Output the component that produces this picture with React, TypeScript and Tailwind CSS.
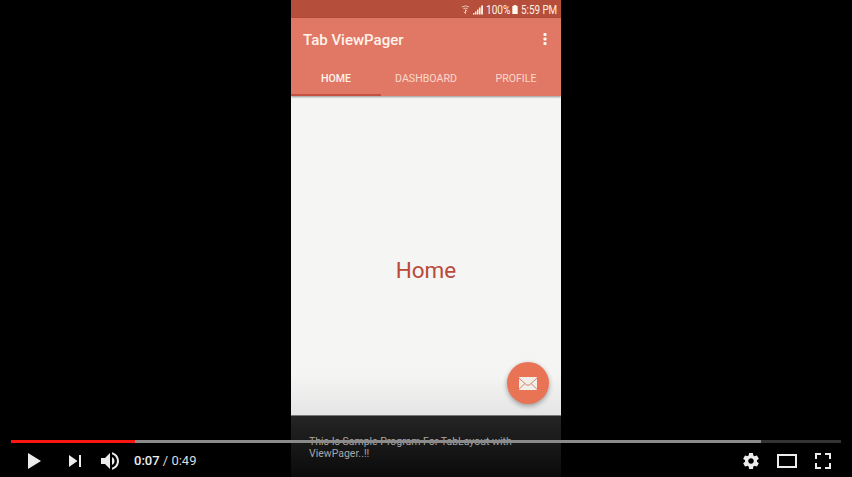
import type { ReactNode } from 'react';

const GEAR =
  'm 23.94,18.78 c .03,-0.25 .05,-0.51 .05,-0.78 0,-0.27 -0.02,-0.52 -0.05,-0.78 l 1.68,-1.32 c .15,-0.12 .19,-0.33 .09,-0.51 l -1.6,-2.76 c -0.09,-0.17 -0.31,-0.24 -0.48,-0.17 l -1.99,.8 c -0.41,-0.32 -0.86,-0.58 -1.35,-0.78 l -0.30,-2.12 c -0.02,-0.19 -0.19,-0.33 -0.39,-0.33 l -3.2,0 c -0.2,0 -0.36,.14 -0.39,.33 l -0.30,2.12 c -0.48,.2 -0.93,.47 -1.35,.78 l -1.99,-0.8 c -0.18,-0.07 -0.39,0 -0.48,.17 l -1.6,2.76 c -0.10,.17 -0.05,.39 .09,.51 l 1.68,1.32 c -0.03,.25 -0.05,.52 -0.05,.78 0,.26 .02,.52 .05,.78 l -1.68,1.32 c -0.15,.12 -0.19,.33 -0.09,.51 l 1.6,2.76 c .09,.17 .31,.24 .48,.17 l 1.99,-0.8 c .41,.32 .86,.58 1.35,.78 l .30,2.12 c .02,.19 .19,.33 .39,.33 l 3.2,0 c .2,0 .36,-0.14 .39,-0.33 l .30,-2.12 c .48,-0.2 .93,-0.47 1.35,-0.78 l 1.99,.8 c .18,.07 .39,0 .48,-0.17 l 1.6,-2.76 c .09,-0.17 .05,-0.39 -0.09,-0.51 l -1.68,-1.32 0,0 z m -5.94,2.01 c -1.54,0 -2.8,-1.25 -2.8,-2.8 0,-1.54 1.25,-2.8 2.8,-2.8 1.54,0 2.8,1.25 2.8,2.8 0,1.54 -1.25,2.8 -2.8,2.8 l 0,0 z';

function ControlButton({ label, wide, children }: { label: string; wide?: boolean; children: ReactNode }) {
  return (
    <button aria-label={label} className={wide ? 'flex w-[46px] justify-center' : 'flex w-9 justify-center'}>
      <svg viewBox="0 0 36 36" className="block size-9 shrink-0 fill-[#ececec]">
        {children}
      </svg>
    </button>
  );
}

function StatusBar() {
  return (
    <div className="flex h-[18px] items-center justify-end bg-[#b54e3b] pt-px pr-1 text-[12px] text-[#fff3e8]">
      <svg viewBox="0 0 10 10" className="mr-[3px] size-[9px]" fill="none" stroke="#ecc6b1" strokeWidth="1.1">
        <path d="M1 2.2Q5 -.3 9 2.2M2.6 4.2Q5 2.6 7.4 4.2" />
        <path d="M5 5v4.5M3.2 7.5 5 9.5M5 5.2 6.8 7" />
      </svg>
      <svg viewBox="0 0 10 10" className="mr-[3px] size-[10px]" fill="#fbe9dc">
        <path d="M0 8h1.5v1.5H0zM2 6.5h1.5v3H2zM4 4.5h1.5v5H4zM6 2.5h1.6v7H6zM8.1.5H10v9H8.1z" />
      </svg>
      <span className="w-[25px] whitespace-nowrap"><span className="inline-block origin-left scale-x-[0.84]">100%</span></span>
      <svg viewBox="0 0 6 10" className="mr-[3px] ml-px h-[9px] w-[6px]" fill="#fff6ee">
        <path d="M1.5 0h3v1H6v9H0V1h1.5z" />
      </svg>
      <span className="w-[36px] whitespace-nowrap"><span className="inline-block origin-left scale-x-[0.82]">5:59 PM</span></span>
    </div>
  );
}

function Phone() {
  return (
    <div className="flex h-full w-[270px] flex-col bg-[#f5f5f4]">
      <StatusBar />
      <header className="z-10 flex h-[78px] flex-col bg-[#e17866] shadow-[0_1px_2px_rgba(0,0,0,0.4)]">
        <div className="flex h-[42px] items-center justify-between pt-[2px] pr-[14.5px] pl-3">
          <h1 className="text-[15px] font-medium text-[#fff3ea]">Tab ViewPager</h1>
          <svg viewBox="0 0 4 12" className="mb-[2px] h-3 w-1" fill="#fff6ee">
            <rect x=".5" y="0" width="3" height="3" rx=".8" />
            <rect x=".5" y="4.5" width="3" height="3" rx=".8" />
            <rect x=".5" y="9" width="3" height="3" rx=".8" />
          </svg>
        </div>
        <nav className="grid h-9 grid-cols-3 text-center text-[10.6px] leading-[32px] text-[#f9d9ca]">
          <span className="h-9 border-b-2 border-[#c4503f] pt-[2px] font-medium text-[#fff3ea]"><span className="relative top-px">HOME</span></span>
          <span className="pt-[3px]">DASHBOARD</span>
          <span className="pt-[3px]">PROFILE</span>
        </nav>
      </header>
      <main className="relative flex h-[319px] items-center justify-center bg-linear-to-b from-[#f5f5f4] from-87% to-[#e5e5e5] pt-[31px]">
        <span className="text-[22.5px] text-[#b94a3a]">Home</span>
        <button
          aria-label="Mail"
          className="absolute right-3 bottom-[11px] flex size-[42px] items-center justify-center rounded-full bg-[#e87355] shadow-[0_2px_5px_rgba(0,0,0,0.35)]"
        >
          <svg viewBox="0 0 18 13" className="h-[13px] w-[18px]">
            <rect width="18" height="13" rx=".5" fill="#f1eeea" />
            <path d="M0 1.2 7.2 7.6Q9 9 10.8 7.6L18 1.2M0 12.2 5.8 6.6M18 12.2 12.2 6.6" fill="none" stroke="#d9755c" strokeWidth=".9" />
          </svg>
        </button>
      </main>
      <footer className="flex-1 border-t border-[#777] bg-linear-to-b from-[#252525] to-[#0b0b0b] pt-5 pl-[18px] text-[10.5px] leading-3 text-[#a6a6a6]">
        <p>This Is Sample Program For TabLayout with</p>
        <p>ViewPager..!!</p>
      </footer>
    </div>
  );
}

function PlayerControls() {
  return (
    <div className="absolute inset-x-0 bottom-0 z-20 h-[37px] overflow-hidden px-[11px]">
      <div className="flex h-[3px] bg-white/20">
        <div className="w-[124px] bg-[#fb1612]" />
        <div className="w-[626px] bg-[#8b8b8b]" />
      </div>
      <div className="flex h-9">
        <ControlButton label="Play" wide>
          <path d="M12 10 25 18 12 26z" />
        </ControlButton>
        <ControlButton label="Next">
          <path d="M12 24 20.5 18 12 12zM22 12v12h2V12z" />
        </ControlButton>
        <ControlButton label="Mute">
          <path d="M8,21 L12,21 L17,26 L17,10 L12,15 L8,15 L8,21 Z M19,14 L19,22 C20.48,21.32 21.5,19.77 21.5,18 C21.5,16.26 20.48,14.74 19,14 ZM19,11.29 C21.89,12.15 24,14.83 24,18 C24,21.17 21.89,23.85 19,24.71 L19,26.77 C23.01,25.86 26,22.28 26,18 C26,13.72 23.01,10.14 19,9.23 L19,11.29 Z" />
        </ControlButton>
        <div className="ml-[5px] flex-1 text-[13px] leading-9 text-[#ddd]">
          <span className="font-medium text-[#eee]">0:07</span> / 0:49
        </div>
        <ControlButton label="Settings">
          <path d={GEAR} />
        </ControlButton>
        <ControlButton label="Theater mode">
          <path fillRule="evenodd" d="M8 11h20v14H8zM10 13v10h16V13z" />
        </ControlButton>
        <ControlButton label="Full screen">
          <path d="M10 16h2v-4h4v-2h-6zM20 10v2h4v4h2v-6zM24 24h-4v2h6v-6h-2zM12 20h-2v6h6v-2h-4z" />
        </ControlButton>
      </div>
    </div>
  );
}

export default function App() {
  return (
    <div className="relative flex h-[477px] w-[852px] justify-center overflow-hidden bg-black font-[Roboto,sans-serif]">
      <Phone />
      <PlayerControls />
    </div>
  );
}
